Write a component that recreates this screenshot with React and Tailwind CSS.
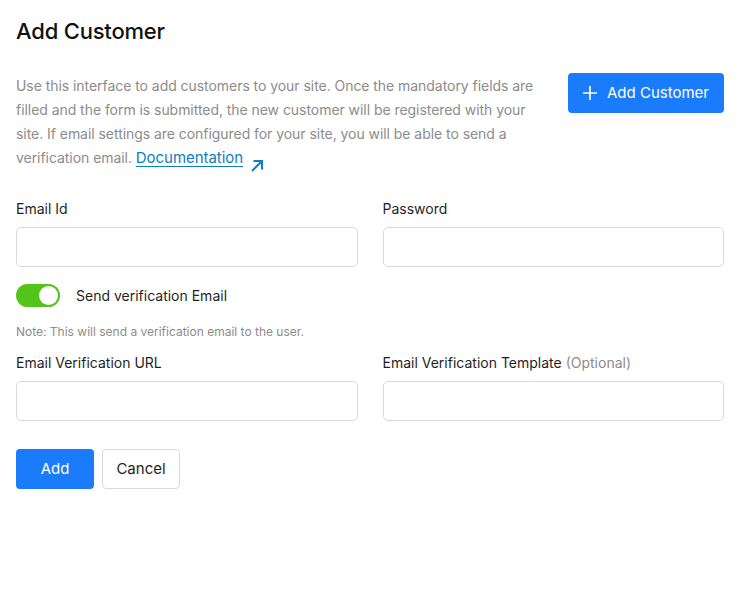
import React, { useState } from 'react'

const Field = ({ label, optional }) => (
  <div className="flex flex-col">
    <label className="text-[14px] leading-5 text-[#1f1f1f]">
      {label}
      {optional && <span className="text-[#8c8c8c]"> (Optional)</span>}
    </label>
    <input className="mt-2 h-10 w-full rounded-[5px] border border-[#d9d9d9] bg-white px-3 text-[14px] outline-none" />
  </div>
)

const App = () => {
  const [sendEmail, setSendEmail] = useState(true)

  return (
    <div className="min-h-screen bg-white px-4 pr-[18px] pt-[16px] font-['Inter','Liberation_Sans',sans-serif]">
      <h1 className="text-[22px] leading-[30px] font-medium text-[#111] tracking-[-0.2px]">Add Customer</h1>

      <div className="mt-[28px] flex items-start justify-between">
        <p className="w-[527px] text-[14px] leading-6 tracking-[-0.05px] text-[#8c8c8c]">
          Use this interface to add customers to your site. Once the mandatory fields are filled and the form is submitted, the new customer will be registered with your site. If email settings are configured for your site, you will be able to send a verification email.{' '}
          <a href="#" className="text-[15px] text-[#0a7fc2] underline underline-offset-[3px] decoration-1">Documentation</a>
          <svg className="ml-[7px] inline-block translate-y-[7px]" width="14" height="14" viewBox="0 0 14 14" fill="none" stroke="#0a7fc2" strokeWidth="2">
            <path d="M2 12L12 2M3.5 2h8.5v8.5" />
          </svg>
        </p>
        <button className="mt-[-1px] flex h-10 w-[156px] items-center justify-center gap-[10px] rounded-[4px] bg-[#1a7cfb] text-[15px] text-white">
          <svg width="14" height="14" viewBox="0 0 14 14" stroke="white" strokeWidth="1.6">
            <path d="M7 0v14M0 7h14" />
          </svg>
          Add Customer
        </button>
      </div>

      <div className="mt-[29px] grid grid-cols-2 gap-x-[25px]">
        <Field label="Email Id" />
        <Field label="Password" />
      </div>

      <div className="mt-[17px] flex items-center gap-4">
        <button
          onClick={() => setSendEmail(!sendEmail)}
          className={`relative h-[23px] w-[44px] rounded-full ${sendEmail ? 'bg-[#52c41a]' : 'bg-[#bfbfbf]'}`}
        >
          <span className={`absolute top-[2px] h-[19px] w-[19px] rounded-full bg-white ${sendEmail ? 'left-[23px]' : 'left-[2px]'}`} />
        </button>
        <span className="text-[14px] text-[#1f1f1f]">Send verification Email</span>
      </div>

      <p className="mt-[15px] text-[12px] leading-5 text-[#8c8c8c]">Note: This will send a verification email to the user.</p>

      <div className="mt-[11px] grid grid-cols-2 gap-x-[25px]">
        <Field label="Email Verification URL" />
        <Field label="Email Verification Template" optional />
      </div>

      <div className="mt-[28px] flex gap-2">
        <button className="h-10 w-[78px] rounded-[4px] bg-[#1a7cfb] text-[15px] text-white">Add</button>
        <button className="h-10 w-[78px] rounded-[4px] border border-[#d9d9d9] bg-white text-[15px] text-[#1f1f1f]">Cancel</button>
      </div>
    </div>
  )
}

export default App
